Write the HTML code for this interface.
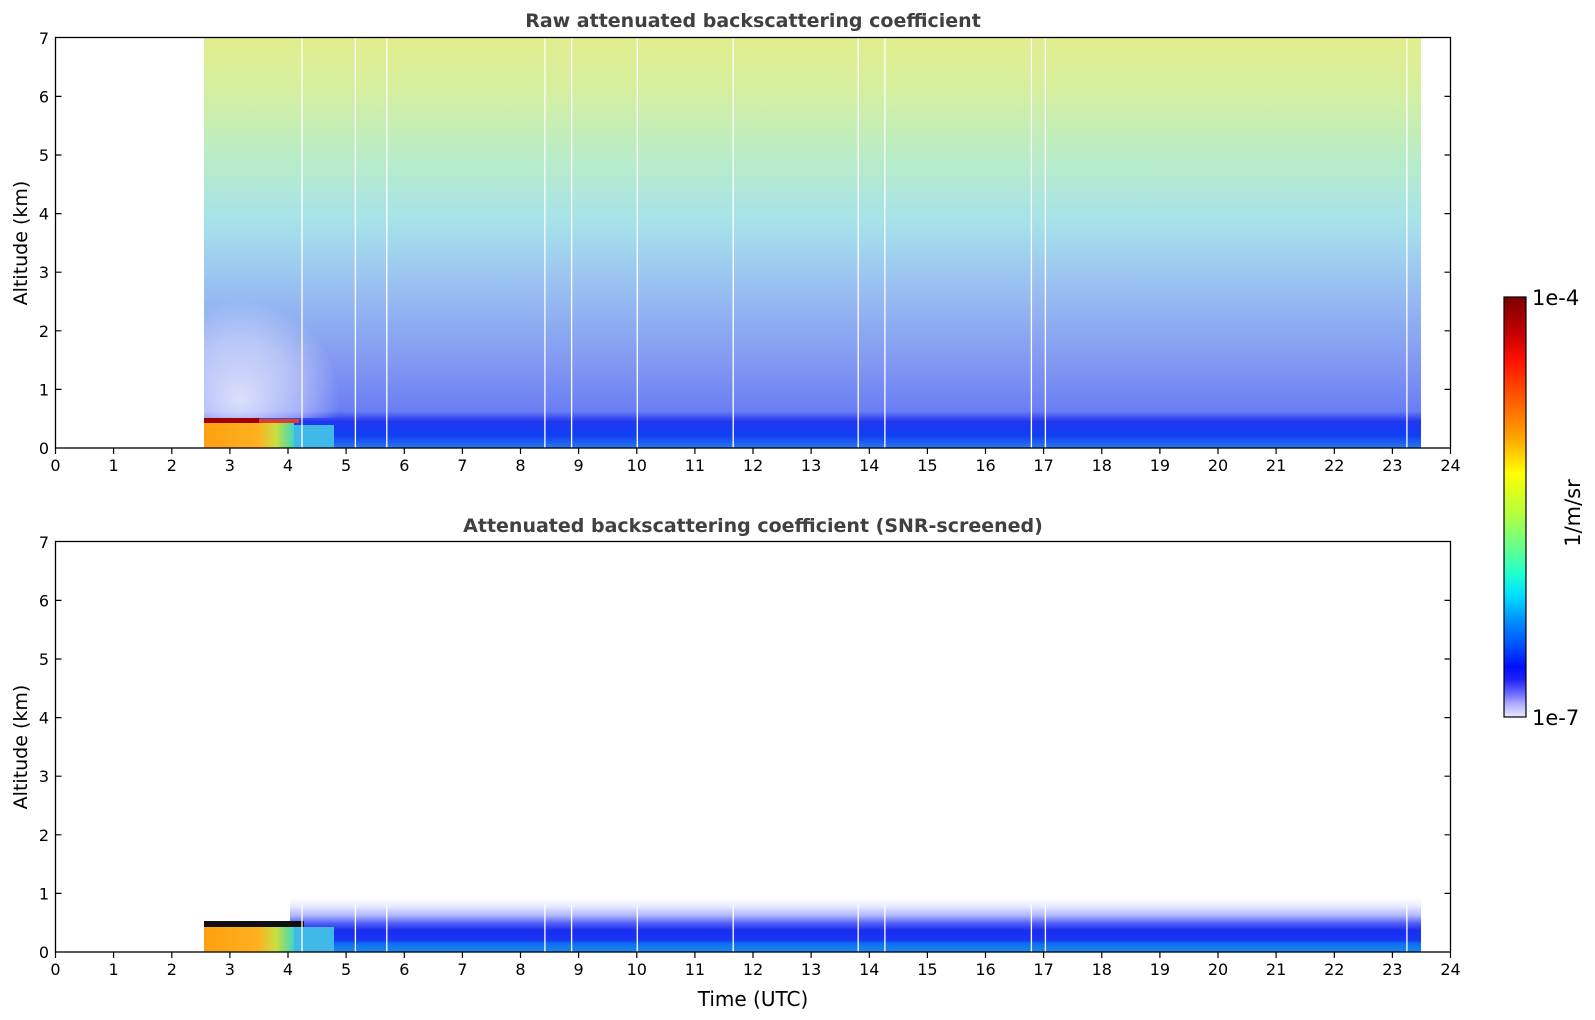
<!DOCTYPE html>
<html><head><meta charset="utf-8"><style>
html,body{margin:0;padding:0;background:#fff;}
svg{display:block;font-family:"DejaVu Sans","Liberation Sans",sans-serif;}
</style></head><body>
<svg width="1595" height="1020" viewBox="0 0 1595 1020" xmlns="http://www.w3.org/2000/svg">
<defs>
<linearGradient id="top" x1="0" y1="37.5" x2="0" y2="448" gradientUnits="userSpaceOnUse">
<stop offset="0" stop-color="#e2ee8e"/>
<stop offset="0.12" stop-color="#d6ef9e"/>
<stop offset="0.3" stop-color="#b8ecc8"/>
<stop offset="0.45" stop-color="#a6e2ea"/>
<stop offset="0.62" stop-color="#98bdf2"/>
<stop offset="0.8" stop-color="#8296f2"/>
<stop offset="0.91" stop-color="#6a7ef4"/>
<stop offset="0.935" stop-color="#2236f0"/>
<stop offset="0.97" stop-color="#1040f4"/>
<stop offset="1" stop-color="#2a78ee"/>
</linearGradient>
<radialGradient id="wh" cx="240" cy="400" r="100" gradientUnits="userSpaceOnUse">
<stop offset="0" stop-color="#fff" stop-opacity="0.75"/>
<stop offset="0.6" stop-color="#fff" stop-opacity="0.4"/>
<stop offset="1" stop-color="#fff" stop-opacity="0"/>
</radialGradient>
<linearGradient id="bot" x1="0" y1="898" x2="0" y2="952" gradientUnits="userSpaceOnUse">
<stop offset="0" stop-color="#ffffff"/>
<stop offset="0.15" stop-color="#e8eaff"/>
<stop offset="0.32" stop-color="#b0b8ff"/>
<stop offset="0.47" stop-color="#5060f6"/>
<stop offset="0.6" stop-color="#1a2cf0"/>
<stop offset="0.78" stop-color="#1838f2"/>
<stop offset="0.85" stop-color="#1070f0"/>
<stop offset="1" stop-color="#1888ee"/>
</linearGradient>
<linearGradient id="org" x1="0" y1="0" x2="1" y2="0">
<stop offset="0" stop-color="#ffa010"/>
<stop offset="0.6" stop-color="#ffb020"/>
<stop offset="0.8" stop-color="#c8e040"/>
<stop offset="1" stop-color="#40d8c0"/>
</linearGradient>
<linearGradient id="cb" x1="0" y1="0" x2="0" y2="1">
<stop offset="0" stop-color="#7a0000"/>
<stop offset="0.08" stop-color="#c00000"/>
<stop offset="0.15" stop-color="#ff1000"/>
<stop offset="0.25" stop-color="#ff6000"/>
<stop offset="0.33" stop-color="#ffa000"/>
<stop offset="0.42" stop-color="#ffff00"/>
<stop offset="0.52" stop-color="#b0ff40"/>
<stop offset="0.6" stop-color="#60ff90"/>
<stop offset="0.66" stop-color="#20ffd0"/>
<stop offset="0.71" stop-color="#00e0ff"/>
<stop offset="0.77" stop-color="#0090ff"/>
<stop offset="0.83" stop-color="#0050ff"/>
<stop offset="0.88" stop-color="#0010ff"/>
<stop offset="0.91" stop-color="#2020f8"/>
<stop offset="0.94" stop-color="#6060ff"/>
<stop offset="0.97" stop-color="#b0b0ff"/>
<stop offset="1" stop-color="#e8e8ff"/>
</linearGradient>
</defs>

<text x="753" y="27" font-size="19" font-weight="bold" fill="#404040" text-anchor="middle">Raw attenuated backscattering coefficient</text>
<text x="753" y="532" font-size="19" font-weight="bold" fill="#404040" text-anchor="middle">Attenuated backscattering coefficient (SNR-screened)</text>

<rect x="204" y="37.5" width="1217" height="410.5" fill="url(#top)"/>
<rect x="204" y="300" width="200" height="118" fill="url(#wh)"/>
<rect x="204" y="418" width="55" height="5" fill="#a00000"/>
<rect x="259" y="419" width="40" height="4" fill="#e04020"/>
<rect x="204" y="423" width="90" height="25" fill="url(#org)"/>
<rect x="294" y="425" width="40" height="23" fill="#40b8e8"/>
<g stroke="#fff" stroke-width="1.3">
<line x1="302" y1="37.5" x2="302" y2="448"/><line x1="355.4" y1="37.5" x2="355.4" y2="448"/><line x1="386.8" y1="37.5" x2="386.8" y2="448"/><line x1="544.9" y1="37.5" x2="544.9" y2="448"/><line x1="571.6" y1="37.5" x2="571.6" y2="448"/><line x1="637.3" y1="37.5" x2="637.3" y2="448"/><line x1="733.2" y1="37.5" x2="733.2" y2="448"/><line x1="858.2" y1="37.5" x2="858.2" y2="448"/><line x1="884.9" y1="37.5" x2="884.9" y2="448"/><line x1="1031.4" y1="37.5" x2="1031.4" y2="448"/><line x1="1045.4" y1="37.5" x2="1045.4" y2="448"/><line x1="1406.9" y1="37.5" x2="1406.9" y2="448"/>
</g>

<rect x="290" y="898" width="1131" height="54" fill="url(#bot)"/>
<rect x="204" y="921" width="100" height="6" fill="#101010"/>
<rect x="204" y="927" width="90" height="25" fill="url(#org)"/>
<rect x="294" y="927" width="40" height="25" fill="#40b8e8"/>
<g stroke="#fff" stroke-width="1.3">
<line x1="302" y1="905" x2="302" y2="952"/><line x1="355.4" y1="905" x2="355.4" y2="952"/><line x1="386.8" y1="905" x2="386.8" y2="952"/><line x1="544.9" y1="905" x2="544.9" y2="952"/><line x1="571.6" y1="905" x2="571.6" y2="952"/><line x1="637.3" y1="905" x2="637.3" y2="952"/><line x1="733.2" y1="905" x2="733.2" y2="952"/><line x1="858.2" y1="905" x2="858.2" y2="952"/><line x1="884.9" y1="905" x2="884.9" y2="952"/><line x1="1031.4" y1="905" x2="1031.4" y2="952"/><line x1="1045.4" y1="905" x2="1045.4" y2="952"/><line x1="1406.9" y1="905" x2="1406.9" y2="952"/>
</g>

<g id="ax">
<rect x="55.5" y="37.5" width="1395" height="410.5" fill="none" stroke="#000" stroke-width="1.3"/>
<g stroke="#000" stroke-width="1.2">
<path d="M55.5 448v6M113.6 448v6M171.8 448v6M229.9 448v6M288 448v6M346.1 448v6M404.3 448v6M462.4 448v6M520.5 448v6M578.6 448v6M636.8 448v6M694.9 448v6M753 448v6M811.1 448v6M869.3 448v6M927.4 448v6M985.5 448v6M1043.6 448v6M1101.8 448v6M1159.9 448v6M1218 448v6M1276.1 448v6M1334.3 448v6M1392.4 448v6M1450.5 448v6"/>
<path d="M55.5 389.4h6M55.5 330.8h6M55.5 272.2h6M55.5 213.6h6M55.5 155h6M55.5 96.4h6M1450.5 389.4h-6M1450.5 330.8h-6M1450.5 272.2h-6M1450.5 213.6h-6M1450.5 155h-6M1450.5 96.4h-6"/>
</g>
<g font-size="16" fill="#000" text-anchor="middle">
<text x="55.5" y="471">0</text><text x="113.6" y="471">1</text><text x="171.8" y="471">2</text><text x="229.9" y="471">3</text><text x="288" y="471">4</text><text x="346.1" y="471">5</text><text x="404.3" y="471">6</text><text x="462.4" y="471">7</text><text x="520.5" y="471">8</text><text x="578.6" y="471">9</text><text x="636.8" y="471">10</text><text x="694.9" y="471">11</text><text x="753" y="471">12</text><text x="811.1" y="471">13</text><text x="869.3" y="471">14</text><text x="927.4" y="471">15</text><text x="985.5" y="471">16</text><text x="1043.6" y="471">17</text><text x="1101.8" y="471">18</text><text x="1159.9" y="471">19</text><text x="1218" y="471">20</text><text x="1276.1" y="471">21</text><text x="1334.3" y="471">22</text><text x="1392.4" y="471">23</text><text x="1450.5" y="471">24</text>
</g>
<g font-size="16" fill="#000" text-anchor="end">
<text x="49" y="454">0</text><text x="49" y="395.4">1</text><text x="49" y="336.8">2</text><text x="49" y="278.2">3</text><text x="49" y="219.6">4</text><text x="49" y="161">5</text><text x="49" y="102.4">6</text><text x="49" y="43.8">7</text>
</g>
<text transform="translate(27 243) rotate(-90)" font-size="19" fill="#000" text-anchor="middle">Altitude (km)</text>
</g>
<use href="#ax" transform="translate(0 504)"/>

<text x="753" y="1006" font-size="20" fill="#000" text-anchor="middle">Time (UTC)</text>

<rect x="1504" y="297" width="22" height="420" fill="url(#cb)" stroke="#000" stroke-width="1.2"/>
<text x="1532" y="305" font-size="21" fill="#000">1e-4</text>
<text x="1532" y="725" font-size="21" fill="#000">1e-7</text>
<text transform="translate(1580 513) rotate(-90)" font-size="21" fill="#000" text-anchor="middle">1/m/sr</text>
</svg>
</body></html>
